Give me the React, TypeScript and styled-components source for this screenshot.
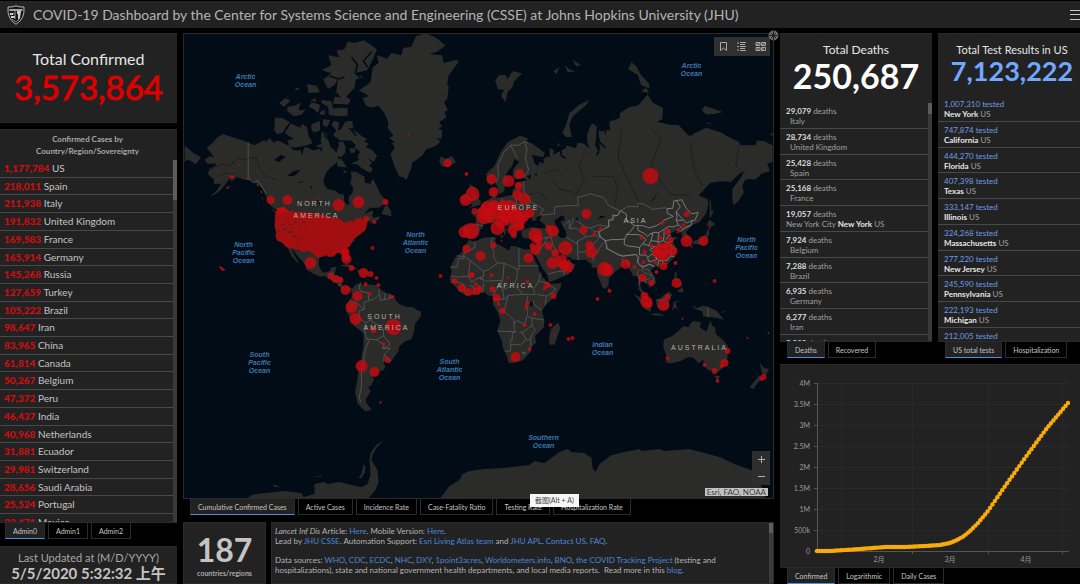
import React from "react";
import styled, { createGlobalStyle, css } from "styled-components";

const GlobalStyle = createGlobalStyle`
  * { box-sizing: border-box; }
  body {
    margin: 0;
    background: #000;
    color: #bdbdbd;
    font-family: Lato, "Noto Sans CJK SC", sans-serif;
    font-size: 8px;
    overflow: hidden;
  }
  h1, h2, p, ul { margin: 0; padding: 0; font-weight: 400; }
  ul { list-style: none; }
  button { font-family: inherit; border: 0; padding: 0; margin: 0; color: inherit; background: none; }
`;

/* ---------- page frame ---------- */

const Page = styled.div`
  height: 100vh;
  min-height: 480px;
  display: flex;
  flex-direction: column;
  gap: 5px;
  padding-top: 1px;
`;

const Header = styled.header`
  flex: none;
  height: 27px;
  display: flex;
  align-items: center;
  background: #222;
  padding-left: 7px;
`;

const Title = styled.h1`
  flex: 1;
  margin-left: 8px;
  font-size: 14px;
  line-height: 20px;
  white-space: nowrap;
  color: #b4b4b4;
`;

const MenuButton = styled.button`
  width: 10px;
  height: 12px;
  display: flex;
  flex-direction: column;
  justify-content: space-between;
  padding: 1px 0;
  span { height: 1px; background: #c8c8c8; }
`;

const Columns = styled.main`
  flex: 1;
  min-height: 0;
  display: grid;
  grid-template-columns: minmax(0, 177fr) minmax(0, 591fr) minmax(0, 300fr);
  column-gap: 6px;
`;

const Column = styled.div`
  display: flex;
  flex-direction: column;
  min-height: 0;
  min-width: 0;
`;

const Panel = styled.section`
  background: #222;
  border: 1px solid #2a2a2a;
  border-width: 1px 0;
  overflow: hidden;
`;

/* ---------- tabs ---------- */

const TabBar = styled.div<{ $indent: number; $after?: number }>`
  flex: none;
  display: flex;
  gap: 3px;
  padding-left: ${(p) => p.$indent}px;
  margin-bottom: ${(p) => p.$after ?? 7}px;
`;

const TabButton = styled.button<{ $active?: boolean }>`
  height: 16px;
  padding: 0 7px;
  font-size: 7px;
  line-height: 12px;
  white-space: nowrap;
  color: #c4c4c4;
  border: 1px solid #2b2b2b;
  border-top: 0;
  ${(p) =>
    p.$active &&
    css`
      background: #222;
      border-bottom: 1px solid #4c8fe0;
    `}
`;

function Tabs({ items, indent, after }: { items: string[]; indent: number; after?: number }) {
  return (
    <TabBar $indent={indent} $after={after} role="tablist">
      {items.map((t, i) => (
        <TabButton key={t} role="tab" aria-selected={i === 0} $active={i === 0}>
          {t}
        </TabButton>
      ))}
    </TabBar>
  );
}

/* ---------- left column ---------- */

const TotalPanel = styled(Panel)`
  flex: none;
  height: 90px;
  margin-bottom: 6px;
  padding-top: 15px;
  text-align: center;
`;

const TotalLabel = styled.h2<{ $size: number }>`
  font-size: ${(p) => p.$size}px;
  line-height: 20px;
  color: #e6e6e6;
  white-space: nowrap;
`;

const TotalValue = styled.p<{ $size: number; $color: string; $bold?: boolean; $line: number }>`
  font-size: ${(p) => p.$size}px;
  line-height: ${(p) => p.$line}px;
  color: ${(p) => p.$color};
  font-weight: ${(p) => (p.$bold ? 700 : 400)};
  -webkit-text-stroke: ${(p) => (p.$bold ? 0 : 1)}px ${(p) => p.$color};
  white-space: nowrap;
`;

const CountryPanel = styled(Panel)`
  flex: 1;
  min-height: 0;
  display: flex;
  flex-direction: column;
`;

const CountryHeading = styled.h2`
  flex: none;
  height: 30px;
  padding: 3px 2px 0 0;
  font-size: 8px;
  line-height: 12px;
  font-weight: 700;
  text-align: center;
  color: #a8a8a8;
`;

const ScrollArea = styled.div<{ $thumb: number }>`
  flex: 1;
  min-height: 0;
  display: grid;
  grid-template-columns: minmax(0, 1fr) 4px;
  &::after {
    content: "";
    background: linear-gradient(#5c5c5c, #5c5c5c) top / 100% ${(p) => p.$thumb}px no-repeat #3a3a3a;
  }
`;

const Rows = styled.ul<{ $count: number; $cut: number }>`
  flex: 1;
  display: grid;
  min-height: 0;
  grid-template-rows: repeat(${(p) => p.$count}, minmax(0, 1fr)) ${(p) => p.$cut}px;
`;

const CountryRow = styled.li`
  overflow: hidden;
  padding-left: 4px;
  border-bottom: 1px solid #484848;
  font-size: 10px;
  line-height: 17px;
  white-space: nowrap;
  color: #c4c4c4;
  &:last-child { border: 0; }
  strong { color: #d00d10; font-weight: 900; }
`;

const UpdatedPanel = styled(Panel)`
  flex: none;
  height: 38px;
  padding-top: 3px;
  text-align: center;
  white-space: nowrap;
`;

const UpdatedLabel = styled.h2`
  font-size: 11px;
  line-height: 15px;
  color: #a8a8a8;
`;

const UpdatedValue = styled.p`
  font-size: 15px;
  line-height: 16px;
  font-weight: 700;
  color: #c4c4c4;
`;

/* ---------- centre column ---------- */

const MapPanel = styled.section`
  position: relative;
  flex: 1;
  min-height: 0;
  background: #010c17;
  border: 1px solid #2a2a2a;
`;

const MapSvg = styled.svg`
  display: block;
  width: 100%;
  height: 100%;
  text {
    font-family: "Liberation Sans", sans-serif;
    font-size: 7px;
  }
`;

const MapTools = styled.div`
  position: absolute;
  top: 3px;
  right: 3px;
  width: 56px;
  height: 19px;
  display: flex;
  justify-content: space-around;
  align-items: center;
  background: #303030;
  color: #a8a8a8;
  button, svg { display: block; }
`;

const ZoomTools = styled.div`
  position: absolute;
  right: 3px;
  bottom: 13px;
  width: 18px;
  display: flex;
  flex-direction: column;
  background: #2e2e2e;
  button {
    height: 17px;
    display: grid;
    place-items: center;
    color: #b0b0b0;
  }
`;

const Attribution = styled.div`
  position: absolute;
  right: 5px;
  bottom: 2px;
  padding: 0 2px;
  font-size: 8px;
  line-height: 8px;
  background: #c2c2c2;
  color: #3c3c3c;
`;

const MoveHandle = styled.button`
  position: absolute;
  top: -4px;
  right: -6px;
  width: 11px;
  height: 11px;
  svg { display: block; }
`;

const Tooltip = styled.div`
  position: absolute;
  left: 346px;
  bottom: -9px;
  z-index: 2;
  padding: 0 5px;
  font-size: 7px;
  line-height: 13px;
  white-space: nowrap;
  background: #f6f6f6;
  color: #444;
`;

const FooterRow = styled.div`
  flex: none;
  height: 62px;
  display: grid;
  grid-template-columns: 83px minmax(0, 1fr);
  gap: 5px;
`;

const CountPanel = styled(Panel)`
  text-align: center;
  padding-top: 9px;
  border-width: 1px;
`;

const CountValue = styled.p`
  font-size: 32px;
  line-height: 36px;
  font-weight: 700;
  color: #c4c4c4;
`;

const CountLabel = styled.p`
  font-size: 7px;
  line-height: 11px;
  font-weight: 700;
  color: #a8a8a8;
`;

const NotesPanel = styled(Panel)`
  display: flex;
  border-width: 1px;
`;

const Notes = styled.div`
  padding: 3px 24px 0 3px;
  font-size: 8px;
  line-height: 10px;
  color: #b4b4b4;
  p + p { margin-top: 9px; }
  a { color: #4a86d8; text-decoration: none; }
`;

/* ---------- right column ---------- */

const StatGrid = styled.div`
  flex: 1;
  min-height: 0;
  display: grid;
  grid-template-columns: minmax(0, 152fr) minmax(0, 142fr);
  column-gap: 6px;
`;

const StatPanel = styled(Panel)`
  flex: 1;
  min-height: 0;
  display: flex;
  flex-direction: column;
`;

const StatHead = styled.div<{ $height: number; $shift?: number }>`
  flex: none;
  height: ${(p) => p.$height}px;
  padding: 6px 0 0 ${(p) => p.$shift ?? 0}px;
  text-align: center;
`;

const StatRow = styled.li<{ $tested?: boolean }>`
  overflow: hidden;
  padding: 3px 0 0 6px;
  border-bottom: 1px solid #484848;
  font-size: 8px;
  line-height: 10px;
  white-space: nowrap;
  color: #a0a0a0;
  &:last-child { border: 0; }
  div:first-child { color: ${(p) => (p.$tested ? "#6d9ce4" : "#a0a0a0")}; }
  div:first-child b { color: ${(p) => (p.$tested ? "#6d9ce4" : "#dcdcdc")}; font-weight: ${(p) => (p.$tested ? 400 : 700)}; }
  b { color: #e6e6e6; }
`;

const Place = styled.div<{ $inset?: boolean }>`
  padding-left: ${(p) => (p.$inset ? 4 : 0)}px;
`;

const ChartPanel = styled(Panel)`
  flex: none;
  height: 204px;
  svg { display: block; width: 100%; height: 100%; }
  text { font-size: 7px; fill: #9a9a9a; }
`;

/* ---------- data ---------- */

const countries: [string, string][] = [
  ["1,177,784", "US"], ["218,011", "Spain"], ["211,938", "Italy"], ["191,832", "United Kingdom"],
  ["169,583", "France"], ["165,914", "Germany"], ["145,268", "Russia"], ["127,659", "Turkey"],
  ["105,222", "Brazil"], ["98,647", "Iran"], ["83,965", "China"], ["61,814", "Canada"],
  ["50,267", "Belgium"], ["47,372", "Peru"], ["46,437", "India"], ["40,968", "Netherlands"],
  ["31,881", "Ecuador"], ["29,981", "Switzerland"], ["28,656", "Saudi Arabia"], ["25,524", "Portugal"],
  ["23,471", "Mexico"],
];

const deaths: [string, React.ReactNode, boolean?][] = [
  ["29,079", "Italy"], ["28,734", "United Kingdom"], ["25,428", "Spain"], ["25,168", "France"],
  ["19,057", <>New York City <b>New York</b> US</>, true], ["7,924", "Belgium"], ["7,288", "Brazil"],
  ["6,935", "Germany"], ["6,277", "Iran"], ["5,082", "Netherlands"],
];

const tests: [string, string][] = [
  ["1,007,310", "New York"], ["747,874", "California"], ["444,270", "Florida"], ["407,398", "Texas"],
  ["333,147", "Illinois"], ["324,268", "Massachusetts"], ["277,220", "New Jersey"],
  ["245,590", "Pennsylvania"], ["222,193", "Michigan"], ["212,005", ""],
];

/* ---------- world map ---------- */

const PX_PER_DEG = 1.6304;
const RADIUS = 93.4;

/* Web Mercator, from "lon,lat lon,lat ..." to an SVG path */
function geo(points: string, close = true) {
  const d = points
    .trim()
    .split(/\s+/)
    .map((p) => {
      const [lon, lat] = p.split(",").map(Number);
      const x = 478.6 + lon * PX_PER_DEG;
      const y = 302.6 - RADIUS * Math.log(Math.tan(Math.PI / 4 + (lat * Math.PI) / 360));
      return x.toFixed(1) + " " + y.toFixed(1);
    })
    .join("L");
  return "M" + d + (close ? "Z" : "");
}

const land = [
  "-168,65.6 -164,66.5 -162,66 -163.5,67.1 -166.5,68.3 -163,69.5 -160,70.6 -156.5,71.3 -152,70.8 -145,70.1 -141,69.6 -137,69 -134,69.6 -131,70.1 -130,69.7 -128,70.5 -125,69.5 -124,70 -121,69.8 -117,69 -115,68.9 -114,68 -111,67.8 -109,67.9 -108,66.7 -107,68 -106,68.7 -101,67.8 -97,68.2 -96,67.3 -95.5,68.5 -96.5,70 -96,71.5 -94.5,72 -93,71.3 -91.5,69.7 -90.5,68.6 -88,67.8 -87,67.2 -85.5,68.8 -85.5,69.8 -82.5,69.7 -81.3,68.6 -81.5,67.2 -84,66.2 -86.5,66.5 -85.5,65.8 -87.5,64.5 -90.5,63.5 -93.5,61.9 -94.7,60 -94.7,58.8 -92.5,57 -88,56.5 -85,55.3 -82.2,55.1 -82.3,53 -81,51.5 -79,51.2 -79.5,54.2 -77,55.7 -76.6,57.5 -78.5,58.8 -77.5,60.5 -78,62.3 -75,62.3 -72,61.5 -69.7,60.9 -69.5,59 -66,58.7 -64.5,60.3 -62,57.8 -60,55.3 -57,53.5 -55.8,52 -58.5,51.3 -60.5,50.2 -66.5,50.2 -70,47.5 -65,49.2 -64.3,48.5 -65,47 -64,46 -60.2,46.8 -61,45.2 -64,44.4 -66,43.5 -65.8,44.6 -67,45 -70,43.7 -70.7,42 -70,41.7 -74,40.6 -75.3,38.5 -76.3,37 -75.6,35.3 -78,33.9 -81,32 -81.4,30.5 -80,27 -80.5,25.2 -81.8,26 -82.7,28 -84,30 -86,30.4 -89.3,30.2 -89.3,29.1 -91,29.2 -94,29.6 -97,28 -97.5,25.5 -97.8,22.5 -96,19 -94.5,18.2 -92,18.6 -90.7,19.5 -90.3,21 -87,21.5 -87.5,19 -88.3,16 -84,15.8 -83.2,15 -83.7,11 -82,9 -79.6,9.6 -77.3,8.6 -77.9,7.3 -80,7.5 -80.5,8.2 -83,8.3 -85.8,10 -87.5,12.9 -91,14 -94,16.1 -96.5,15.7 -101.5,17.7 -105.5,20 -105.5,22 -109,25.7 -112.5,29.5 -114.7,31.7 -112.8,28 -110,24 -109.5,23 -112,24.8 -114.5,27.5 -115.8,30 -117.2,32.5 -120.5,34.5 -122.5,37.5 -124.3,40.3 -124,44 -124.5,48.3 -122.5,48 -123.5,49.3 -127.5,51 -130,54.5 -132,57 -135,58.5 -139,59.8 -144,60 -148,60.8 -151.8,59.2 -151,61 -154,59.3 -158,56.5 -162,55 -164.5,54.6 -161,56 -157.5,58.7 -162,58.7 -162,60 -166,61.7 -164.5,63.2 -161,64 -161,64.6 -166,64.5",
  "-44,59.8 -45.5,60.6 -48.5,61 -49.5,62.2 -51.5,64 -52.5,65.5 -53.7,67 -51,68.5 -53,69.5 -51,69.7 -54.7,70.5 -52,71 -55.5,72.5 -55,73.5 -57.5,75 -61,76.1 -65,75.9 -68.5,76.1 -71,77.2 -67,77.5 -73,78.2 -66,79.2 -64.5,80.8 -61,81.2 -62,81.9 -56,81.6 -53,82.1 -47,81.9 -46,82.5 -41,82.6 -38,83.4 -32,83.6 -26,83.3 -20,82.7 -25,82.2 -30,82 -22,81.9 -21,81.2 -13,81.5 -12,81.3 -18,80 -19,79 -18,78.7 -19,77 -21,76.7 -18.5,75.5 -20.5,75.2 -19.5,74.3 -24,73.5 -22,72.8 -24.5,72.3 -22,72 -22.5,70.3 -26,70.5 -23,69.8 -26,68.8 -32,68 -34,66.7 -37,65.8 -40.5,64.8 -41,63.4 -43,61",
  "-89,76.4 -84,76.4 -80,76.3 -78,77 -81,77.4 -76,78.5 -75,79.5 -70,79.8 -76,80.2 -68,80.5 -65,81.4 -62,82.4 -70,83.1 -76,82.9 -80,83 -82,82.4 -87,82.3 -85,81.7 -92,81.9 -90,81 -96,80.5 -90,80.2 -95,79.5 -92,78.4 -88,78.9 -86,79.6 -87,78 -84,77.3 -88,77.4",
  "-80,75.8 -80,74.6 -86,74.5 -91.5,74.7 -92,76 -96,76.5 -96,77 -90,76.8 -89,75.7 -84,75.9",
  "-81,73.7 -76,72.8 -78,72.2 -74,71.6 -71,70.8 -68,70.3 -70,69.8 -67,69.3 -69,68.6 -65,67.9 -62,66.6 -64,65 -68,66.2 -65,64.8 -67,64 -64.7,63.3 -66,62 -69,62.7 -72,63.5 -74,64.3 -78,64.5 -73,65.5 -74,66.3 -72.5,67.5 -76,68.5 -75,69 -78,70 -85,70 -86,70.4 -89,71 -87,72 -90,73.1 -88,73.8 -85,73.4 -86,72 -84,72.3",
  "-105,69 -101.5,69.5 -104,71 -105,72.7 -108,73.2 -109,72.5 -111,72.8 -115,73.3 -118.5,71.5 -113,70.3 -117,70 -116,69 -113,68.5 -110,68.6",
  "-125,72 -123,71.2 -120,71.6 -118,72.5 -115.5,73.5 -120,74.2 -124.5,74.3",
  "-117,75.3 -113,74.5 -108,74.8 -106,75.5 -110,75.5 -109,76.6 -113,76.1 -117,76",
  "-102,73.2 -97,73.7 -97,72 -101,71.6 -102.5,72.5", "-95,74 -90.5,73.9 -92.5,72.7 -95.5,72.8",
  "-104,76 -101,75.7 -98,75 -97,76.3 -102,76.7", "-105,79 -99,78.8 -97,78 -104,77.9",
  "-122,76.5 -117,77.5 -115,76.9 -119,76", "-87,65.5 -84,65.9 -80.5,63.5 -86,63.8", "-99,69 -95.5,69.3 -96,68.4 -99,68.6",
  "-79,68.3 -75,68.2 -75.5,67.3 -78,67.2", "-83,62.8 -80,62.3 -82,62", "-80,73.7 -77,73.7 -77,73 -80,73.1",
  "-112,78.6 -109,78.4 -112,78.2", "-97,75.2 -94,75.6 -94,74.7 -97,74.8", "-103,76.9 -100,77.2 -99,76.7",
  "-59.3,47.7 -53,46.7 -53.5,48.7 -55.8,51.5 -57.5,50.5", "-128,50.8 -123.5,48.4 -125.5,48.8", "-133,54 -131.5,52.3 -132,54", "-154.5,57.5 -152,58.2 -153,57",
  "-84.8,22 -80,23.2 -74.3,20.2 -77.5,19.9 -78,21", "-74,19.8 -69,19.3 -68.6,18.3 -74,18.2", "-78.3,18.4 -76.3,18", "-67,18.4 -65.7,18.4 -66,18",
  "-77.3,8.6 -75,11 -71.8,12.3 -71.5,10.8 -68,11 -62,10.7 -60,8.5 -57,6 -51.8,4.5 -50,0.5 -48,-1 -44,-2.6 -40,-2.9 -37,-4.8 -35.2,-5.3 -34.9,-8 -38.8,-13 -39.2,-17.5 -41,-22 -44.5,-23 -48.5,-26 -48.7,-28.5 -52.2,-32.5 -54,-34.7 -58.3,-34 -56.8,-36.5 -58,-38.3 -62.2,-39 -62.2,-40.7 -65,-41 -63.8,-42.5 -65.4,-45 -67.5,-46.2 -65.8,-47.5 -69,-51 -68.4,-52.4 -65.3,-54.8 -69,-55.5 -74,-52.5 -75.5,-48 -74,-42 -73.5,-38 -71.5,-32 -70.3,-25 -70.3,-18.5 -76.2,-14 -79.5,-7.5 -81.3,-4.5 -80,-2.5 -80.5,-0.5 -78.8,1.5 -77.2,4 -77.9,7.3",
  "25.8,71 31,70.3 29,69.8 33,69.4 41,67.2 40,66.2 33,66.7 34.8,64.5 37,63.9 37.5,65 40.5,64.6 40,65.6 42.2,66.4 44,66.1 43.8,68.4 46.5,67.9 46,66.8 54,68.4 54,68.9 60,68.4 61,69.6 64.8,69.3 68.5,68.2 67,69.6 66.8,71 68.5,72.6 70,73.3 72.8,72.8 72.5,71 71.8,69 73.5,67.8 72,66.4 74,67 74.8,68.5 73.8,70 74,72 76,71.8 77.5,72 78,71 79,72.2 81,72 80.5,73.6 86.8,74.2 87,75 92,75.9 98,76.2 104,77.7 107,76.6 113.5,75.8 113,74 106,73 110,73.6 118,73 123,73 129,71 131,71 133,71.5 140,72.5 150,71.5 152,71 160,69.7 161,69 170,69 171,70 176,69.8 180.7,68.9 180.7,65 177.4,64.6 179,62.5 174,61.8 170,60 166,60.2 163.5,59.8 162,58 163,56 160,53 156.8,51 156,53.5 156,57 161,60.5 163.5,62.5 160,61.7 155,59.3 149,59.5 142.5,59 135.3,54.8 140.5,53.5 141.3,52 140,48 135.5,44 132,43.2 130.5,42.3 127.5,39.7 129.3,37 129,35.2 126.5,34.5 126.5,37.5 125,38 125,39.6 121.5,39 122,40.6 118,39 119,37.3 122.5,37.2 119.3,35 121.8,31.5 121.8,28.5 119,25.5 116.5,23 113,22 110,20.5 110,21.5 108,21.5 105.8,19 108.5,15.5 109.2,12 106.8,10.4 105,8.7 105,10.3 102.5,12.1 100.9,12.8 100,13.4 99.5,10.5 100.2,8.4 101.5,6.8 103.4,4.5 104.2,1.4 103.4,1.4 101,3.5 100.3,6 98.3,8 98.6,12 97.6,16.3 95,15.8 94.3,18 92.3,20.8 91,22.6 88,21.7 86.8,20.5 85,19.5 82.3,16.7 80.2,15 80.2,13 79.8,10.3 78,8.3 76.5,9 74.8,13 73,17 72.7,21 70.8,20.7 69,22.3 70,23 67.3,24.2 66.5,25.4 61.5,25.1 57.3,25.7 56.5,27.1 53,26.7 51,28 50,30 48,30 48.5,28.3 50.2,26.5 51,24.7 51.5,25.9 51.5,24.3 54,24.1 56.3,26.2 56.7,24.3 59.8,22.5 57.7,19 55,17 52,15.6 45,12.8 43.3,12.7 42.7,16.4 39.1,21 37,25 35,28 34.3,31.3 35,33 36,36.7 33,36.1 30.5,36.5 27.5,36.8 26.5,39 27,40.3 29,41.1 33,42 36,41.5 41.5,41.4 41,43 37.5,45 39.2,47.1 35,46.2 36.5,45.3 33.5,44.5 33,46.1 30.7,46.5 29.5,45.2 28,43.3 28,41.8 28.8,41.1 26,40.7 23.5,40.5 24,38 23,36.5 21.5,37 20.8,38.8 19.4,40.8 19.4,41.9 15.5,44 13.8,45 12.3,45.2 12.5,44 15.5,42 18.5,40.2 16.9,40.4 17,39 15.8,38 16,40 12.5,41.7 10.2,43.8 8,44 5,43.3 3.2,43 3,41.8 0,40 -0.2,38.5 -2,36.8 -5.5,36.1 -6.4,36.9 -8.9,37 -9.3,38.8 -8.8,43.2 -1.8,43.4 -1.2,46 -4.5,48.2 -1.6,48.6 -1.5,49.6 1.5,50 2,51 4.5,52.7 7,53.5 8.6,54 8.2,56.8 10.5,57.6 10.5,55.5 11,54 14,54 18.5,54.7 21,55 21.3,57 24,57.2 23.6,59.1 30,59.8 28,60.5 23,60 21.3,61 21.5,63 25.3,65 22.2,65.8 21,64 17.5,62 17.2,60.7 18.8,59.8 16.5,58 16,56.3 14.3,55.5 12.8,55.5 11,59 8,58.1 5.5,59 5,61.8 10,64 14,67.5 18,69.6",
  "-180,68.9 -175,67.3 -170,66.2 -173,64.4 -178,65.6 -180,65",
  "-5.9,35.8 -2,35.1 3,36.9 10,37.3 11,36.8 10.2,34.3 15.5,32.3 19,30.3 20,32.8 23,32.6 29,30.9 32.3,31.3 34.3,31.3 34.9,29.5 34,28 32.5,29.9 33.5,27.8 35.5,24 37.2,21 37.3,19 39.5,15.5 43.2,12 43.3,11.4 51.2,11.9 50.8,9.5 48,4.5 42,-1 39.2,-5 40.6,-11 40.5,-15 35,-20 35.5,-24 32.8,-26 32.3,-28.7 28,-33 25.7,-34 20,-34.8 18.3,-34 18,-32 15.2,-27 14.4,-22.5 11.8,-17 13.7,-11 12.2,-6 9,-1 9.5,4 6,4.3 4.3,6.3 -2,4.8 -7.6,4.4 -11.5,6.8 -13.2,9 -16.7,12.3 -17.4,14.7 -16.2,19 -17,21 -14.5,26.2 -11.5,28.2 -9.7,30 -9.3,32.5 -6.8,34",
  "-24,65.5 -22.5,66.4 -20,65.8 -16,66.5 -13.6,65 -18.5,63.5 -22.6,63.9", "-5.7,50.1 1.3,51.2 1.7,52.7 -0.2,54 -2,56 -2,57.6 -5,58.6 -6,56.5 -3,54 -4.5,53 -5,51.7 -3,51.4", "-10,52 -6.3,52.3 -6,54.5 -8,55.3 -10,54",
  "8.5,39 9.7,39.2 9.4,42.8 8.6,42", "12.5,38 15.5,38.2 15,36.7", "23.5,35.4 26,35.2 25,35", "32.3,35 34.5,35.6 33.5,34.7",
  "10.5,79.4 13,80 17,80 18,79.5 21,80.4 27,80.2 22,79.3 21,78.6 18,78 17,76.7 14,77.5 16,78.3 12,78.4",
  "51.5,71.5 54,73 56,75 62,76.3 68.5,77 66,76.2 58,74.5 56,73 57.5,70.7 54,70.7", "92,80.6 94,81.3 97,80.9 100,80 105,79 105,78.5 100,78.9 98,80", "103,78.6 100,78.1 105,77.9",
  "137,75.5 139,76.1 143,75.8 150,75.2 145,74.9 140,74.8", "140,73.5 143.5,73.3 141,73.2", "46,80.4 50,80.8 48,80.1", "53,81 56,80.6 60,80.4 55,80.3", "58,81.5 63,81 60,80.9", "178.5,71.3 180.6,71.5 180.6,70.9", "49,69.4 50.5,69 48.5,68.7",
  "142,54.2 143,52 142.9,49 144.5,49 142.7,46 141.9,46.5 142,50", "140,42 141.7,45.4 145.5,43.3 143,42 141,42.5", "131,34 135.5,33.5 140,35.3 142,39.5 141,41.3 139.5,38.5 136.5,36.5 133,35.5", "130,33.5 131.8,33 130.8,31.2",
  "120.3,23.5 121.8,25.1 120.8,22", "108.7,19.3 110.8,20 109.5,18.3", "120.5,18.5 122,18 121.5,15.5 124,12.8 120.5,14", "122,7 125.5,9.6 126,6.5 124,6.3", "122,11.8 125,12.3 125,10 123,9.4",
  "109,1.5 112,3 117,7 119,5 117.5,1 116,-4 110,-3", "95.3,5.5 98,4 103.5,0 106,-3 105.8,-5.8 102,-4 98.5,1.5", "105.5,-6.8 110.5,-6.5 114.5,-8 108,-7.8", "119,-5.5 120,0.5 124.5,1.2 121,0 122.5,-4.5 120.5,-3",
  "131,-1 134,-3.5 138,-1.7 145,-4.3 147.5,-6.2 150.5,-10.5 147,-9.5 143,-9 138,-8.2 137.5,-5.3 133,-4", "149,-6 152,-4.5 151,-6", "124,-10 127,-8.5 125,-9.3", "164,-20 167,-22.3 165,-21.4",
  "114,-22 113.5,-26 115.7,-31.5 115,-34.2 118,-35 123.5,-34 129,-31.7 132,-32 135.5,-34.8 138,-33 138.5,-35.6 141,-38.3 144,-38.5 147,-39 150,-37.2 153,-32 153.3,-26 150.5,-22.5 146,-19 145.3,-15 143.5,-14 142.5,-10.8 141,-15 140,-17.6 136,-15 136.8,-12.2 132,-11.3 130,-13 129,-15 126,-14.2 123,-17 119,-20",
  "144.7,-40.8 148.2,-41 147,-43.6", "172.7,-34.5 175,-37 178.4,-37.7 176,-41.2 174,-39.5", "172.7,-40.6 174,-41.8 171,-44.5 169,-46.7 166.5,-46", "49.2,-12 50.4,-15.5 47,-25 44,-25 43.5,-22 44.5,-16", "79.8,9.5 81.8,7.5 80.3,6",
  "-61,-51.5 -58,-51.7 -60,-52.2",
];

const water = [
  "47,45 51,47 53,46.5 53,45 50.5,44.5 52.5,41.5 54,40 54,37 51,36.8 49,38 50,40.3 47.5,43",
  "58.5,45 61,46.5 61,44.5", "104,51.5 108,53.5 110,55.7 108,54 105,52", "73.5,45.5 78.5,46.6 75,46.9", "30,61 32.5,61.5 32,60", "34.5,61.5 36,62 36,61",
  "-125,65.5 -121,66.8 -118,66.3 -122,65", "-117,61.2 -113,62.5 -109,62.8 -113,61", "-111,59.2 -106,59.5 -109,59", "-99,53.5 -97,52.5 -96.5,50.5 -98,52", "-103,58 -101.5,56.5 -102,58",
  "31.7,0.5 34,0.3 33.5,-2.3 31.8,-2", "29.3,-4 30.8,-8.5 29.5,-6",
];

const borders = [
  "-8.7,27.3 -4.8,25 3.2,19 5.8,19.5 12,23.5 9.5,26.5 9.8,30 8,33 8.5,37", "-8.7,27.3 -8.7,28.8 -2,32 -1.8,35", "-8.7,27.3 -13.2,27.5", "-8.7,27.3 -8.7,26 -12,26 -13,21.3 -17,21.2",
  "-4.8,25 -6,16 -11.5,15.5 -16.4,16", "25,31.7 25,22 25,20 24,20 16,23.5 12,23.5", "25,22 37,22", "16,23.5 15,13.2 13,13.5 4,13 1,15 3.5,16 3.2,19", "24,20 24,15.5 22,11 15,7.5 14,13",
  "22,11 27.5,5 35,5 34,8 37,13 38.5,18", "37,13 43,12", "36,5 42,4 41,-1.5", "42,4 48,8 43,11", "15,7.5 16,2 9.5,2.2", "9,4.5 13.5,11 14,13", "16,2 18.5,4.5 27.5,5", "18.5,4.5 16,-4.8 12.5,-5", "30.5,4 29.5,-1 30.5,-8.5 33,-9.5 40.4,-10.6", "34,1 34,-1 39,-4.7",
  "16.5,-6 19,-8 22,-11 22,-13 24,-11 28.5,-13 30,-8.5", "22,-13 22,-16 23.3,-17.6 12,-17.3", "23.3,-17.6 21,-18.3 21,-22 20,-22 20,-28.5 16.5,-28.6", "20,-25 26,-25 29.5,-22.2 32,-22 32.5,-26.5", "25.2,-17.8 27,-18 29.5,-22.2", "27,-18 30.5,-15.6 33,-14 33,-9.5", "33,-14 35,-16.5 33,-19 32,-22", "27,-29.5 29,-29 28.5,-30.5 27,-29.5", "-6,16 -4,12.5 0,15 3.5,14", "-5.5,10.4 -2.8,9.7 -3,5", "0,11 1.2,6.2", "2.7,6.4 3.5,12", "-8.5,7.6 -8,10.3 -11,12.3 -16.7,12.4", "-7.5,4.5 -8.5,7.6 -11,7",
  "-72,12 -73,9 -72,7 -67.5,6 -67,1.2 -70,0 -69.8,-4.2 -73,-5 -73,-9.5 -70.5,-11 -69,-12.5 -69.3,-17.5 -70.3,-18.3", "-79,1.3 -75,0 -78,-3 -80,-4.3", "-75,0 -70,-4", "-60.5,5 -61,8", "-60.5,5 -60,1.5 -56,2 -51.5,4", "-57,6 -57.5,2", "-54,5.5 -54.5,2.5", "-67,1.2 -64,2 -60.5,5", "-69,-12.5 -65.3,-10 -65,-12 -60,-14 -58,-16.5 -58,-20 -62.5,-22.2 -66.5,-22 -68.5,-21.5 -69.3,-17.5", "-62.5,-22.2 -57.8,-25 -58.5,-27.2 -54.5,-25.5 -54.3,-24 -58,-20", "-68.5,-21.5 -67,-23 -68.5,-26 -70,-31 -70,-34 -71.5,-39 -71.5,-46 -73,-50 -72,-52", "-58.5,-27.2 -53.7,-27 -57.5,-30.2 -58,-34", "-57.5,-30.2 -53.4,-33.7",
  "-92,14.5 -90.5,17.8 -89.2,17.8 -88.5,16", "-89.5,14.2 -87,13", "-85.5,11 -83.7,11", "-90,14 -89,15.7",
  "11,59 12.5,61 12,64 16,67.5 20,69 25,69 28.5,69.8 31,69.5", "20,69 24,66", "28.5,69.8 30,68 29,66 31,62.8 28,60.6", "28,59.5 28,56 31,54 32,52.5 40,49.7 38,47.2", "23.5,54 23.5,51.5 31,51.5 32,52.5", "24,50.5 22.5,49 26.5,48.2 28.2,45.5", "15,51 14.5,53.8", "15,51 12.5,50.2 13.8,48.8 17,48.8 22.5,49", "-1.5,43.3 3,42.5", "7.5,43.8 7,46 8,47.6 8.2,49 6,49.5 2.5,51", "7,46 13.5,46.5 16,46.5", "-7,37.2 -6.9,41.9 -8.8,42",
  "36,36 42.4,37.1 44.8,37.2 44.8,39.6 43.5,41.2", "39,47.2 47,47.8 47,50.5 55,51 61.5,51 61,54 69,55.3 77,54 80,51 87,49 85.5,47.2 80,45 80.3,42.2 74,43 69,41.5 66,42 58.6,45.6 56,41.3 56,45 52.5,42.5", "56,41.3 60,41.5 66.5,37.5 61,35.3 60.5,34 54,37.3", "66.5,37.5 71.5,38 75,37.3 71,34 69.5,31.8 66.5,29.9 61,29.5 61.5,25.2", "61,35.3 61,29.5", "75,37.3 78,35.5 75,32.5 73,29 70,28 71,24.5", "42.4,37.1 41,34.4 39,32.2 35.5,30", "41,34.4 46.5,29.1 48.5,28.5", "39,32.2 37,29.5 35,29.4", "44.8,37.2 46,33 48,30", "43,17.2 48,18.5 52,19 53,16.7", "52,19 55,20 55.5,23.5 51.5,24.3", "69,41.5 71,40 74,40 75,37.3", "88,27.9 81,30.2 78,33", "88,27.9 92,27.8 97,28.3", "88.5,26.3 89,22", "92,25 92.5,21.5",
  "-141,69.6 -141,60.3 -137.5,59 -135,59.7 -130,55.5", "97,28.3 98.5,24 101,21.6 105,23 108,21.6", "98.8,20 97.5,18.5 99,14 98.8,10.5", "101,21.6 100.5,19.5 102,18 105,17 107.5,15 107.5,12.5 106,11", "105.5,15 102.5,13.5 102.9,12", "102,20 104.5,20 107,16", "109.5,1.8 112,1.3 115,3 117.5,4.2",
  "141,-2.6 141,-9.1", "126.5,41.7 130.3,42.5", "87.5,49 92,50.8 98,50.5 98,52 102,51.5 107,49.5 114,50.2 117,49.8",
];

const faintBorders = [
  "-164,63 -157,64.5 -152,64 -148,66 -141,65.5", "-141,66 -136,66 -134,63 -130,61 -124,60", "-160,61 -155,62 -150,61.5",
  "60,55 65,60 62,64 66,68", "70,61 83,61 86,57 84,52", "88,72 86,66 90,62 94,58 98,53 99,50.5", "105,73 112,70 106,64 114,58 118,55 130,55", "45,60 50,57 57,56 60,55", "40,62 48,63 52,61", "130,70 133,62 138,58", "160,69 158,64 163,62", "30,55 38,56 42,53",
];

const chinaBorders = [
  "75,37.3 73.8,39.5 77,41 80.3,42.2 80,45 83,45.2 82.5,47.2 85.5,47 87.5,49 91,47.5 91,45.2 96,42.7 101,42.6 105,41.6 109,42.5 112,43.7 114,45 119.7,46.7 116,48 116,49.8 119.5,50 120,52.8 125,53.2 127.5,50 131,47.700 135,48.300 133,45 131,44.800 131,43 128,42 126,41 124,40",
  "75,37.3 78,35.500 79,32.500 78.8,31.4 82,30.2 86,28 89,27.3 92,27.8 97,28.3 98.5,27 97.6,24 99.5,22 101.5,21.3 105,23 108,21.6",
  "78,35.5 82,36 86,36 90,36.3 91,38.5 93,39.5 96,42.7", "90,36.3 89.5,33.8 92,32.7 95,32.5 99,32 99,28", "91,38.5 98,38.5 101,37.5 103,36 101,34 99,32", "98,42.5 98,40.500 102,39 104,37.5 106,39.2 107,38 106,35.5 104.500,33 101,34", "107,38 107,39.500 111,39.5 114,41 117,42.300 119.500,42 123,43 121.500,45 122,46.5 121.500,48.500 124,50.500 121.5,53", "110.8,39.3 110.3,35 106,35.5", "110.3,34.6 113.500,35.500 114,37.500 114,40.500", "110.3,34.6 111,33 115,32 116,34.5 113.500,35.500", "116,34.5 119.300,35", "115,36 117,38 118,38.200", "115,32 116,29.800 113,29.500 109.500,30 110,32.500 106,32.5 104.500,33", "109.500,30 107,29.500 105.500,31 108,32", "109.500,30 109,27 106.500,28.500 104,26.500 103,28 99,28", "109,27 111,25 113,25 114,22.800", "113,25 114,27.500 113.500,29.500", "116,29.800 118.300,29.500 118,27.500 116,25 113,25", "118.300,29.500 119,31.500 121,31", "116,34.5 119,33 119,31.500", "118,27.500 120.500,27.200", "109,27 109.500,25.500 106,24.500 104.500,24.600 104,26.500", "111,25 110,22", "123,43 125.500,41", "121.500,45 126,45 128,43.800 131,44.800", "121.500,48.500 124,46.500 126,45", "115.500,41 117.500,40.500 117,39",
];

/* x, y, radius of each case marker */
const cases: number[][] = [
  [271,200,4],[288,200,5],[339,205,6],[359,202,6],[386,202,3],[448,163,4],[311,263,6],[347,259,5],[373,248,2],[352,268,3],[346,252,4],[364,273,5],[371,274,3],[377,278,2],[379,285,2],[336,279,4],[331,276,3],[341,280,3],[346,290,5],[358,296,5],[352,307,6],[356,319,6],[394,327,8],[374,330,3],[384,344,2],[388,360,3],[362,366,6],[375,372,5],[381,403,1],[441,276,2],[455,281,3],[462,288,4],[469,292,4],[477,291,4],[473,275,2],[476,284,2],[375,222,2],[367,219,3],[392,297,2],[370,294,2],[366,284,2],
  [467,174,2],[492,179,5],[509,181,6],[520,174,5],[519,186,4],[494,192,5],[518,195,5],[525,199,6],[473,194,7],[466,200,6],[475,211,3],[484,217,7],[488,208,7],[484,212,6],[498,209,7],[510,207,7],[507,215,8],[503,220,7],[518,220,8],[515,214,7],[524,216,6],[530,213,5],[498,228,7],[490,216,7],[513,230,5],[514,235,3],[520,226,5],[494,206,6],[504,205,5],[465,232,6],[472,231,8],[467,249,4],[494,245,3],[481,256,5],[502,241,1],[472,275,3],[492,275,2],[509,278,1],[529,258,5],[536,235,7],[538,239,5],[536,250,5],[533,246,3],[540,245,3],[549,246,4],[553,231,6],[549,228,3],[566,248,7],[556,253,4],[553,263,6],[562,261,6],[568,267,6],[564,265,5],[587,214,5],[584,230,4],[590,245,4],[592,252,6],[605,269,7],[601,229,2],[595,234,2],
  [651,176,8],[608,270,6],[626,264,5],[687,241,6],[704,241,5],[710,228,1],[677,283,5],[662,251,8],[664,256,5],[673,251,5],[658,253,5],[668,246,4],[668,232,3],[671,240,3],[645,252,2],[663,223,2],[687,214,3],[684,225,2],[679,230,2],[661,238,2],[642,238,2],[652,246,2],[656,262,2],[664,266,4],[644,262,2],[676,263,2],[657,272,2],[643,278,4],[652,283,3],[635,267,2],[610,291,2],[598,299,2],[715,281,2],[645,296,4],[647,302,6],[649,304,4],[664,305,6],[668,297,3],
  [493,289,3],[497,298,4],[503,311,3],[499,304,2],[509,277,1],[528,282,2],[548,285,3],[545,288,2],[554,296,3],[527,307,2],[528,303,2],[541,304,1],[535,314,2],[525,325,2],[551,325,2],[555,335,1],[569,339,2],[573,338,2],[530,349,2],[516,357,5],[480,289,3],[728,351,3],[725,363,4],[722,366,2],[715,371,3],[718,381,2],[668,358,2],[705,365,2],[764,377,3],[762,379,2],[748,338,1],[769,333,1],[683,319,1],
  [234,176,1],[228,188,1],[232,177,2],[240,165,1],[258,185,1],[262,192,1],[248,179,1],[409,134,1],[318,199,1],[306,201,1],
];

/* markers that merge into one mass over the United States */
const usCases: number[][] = [
  [281,216,5],[289,216,5],[283,228,7],[282,236,6],[290,242,6],[298,245,5],[304,248,4],[331,250,7],[338,237,8],[351,229,8],[360,225,7],[363,223,4],[346,242,6],[322,252,5],[344,250,4],[346,257,4],
];

const oceans: [number, number, string[]][] = [
  [246, 79, ["Arctic", "Ocean"]], [692, 68, ["Arctic", "Ocean"]], [244, 247, ["North", "Pacific", "Ocean"]],
  [416, 237, ["North", "Atlantic", "Ocean"]], [747, 242, ["North", "Pacific", "Ocean"]], [260, 357, ["South", "Pacific", "Ocean"]],
  [450, 364, ["South", "Atlantic", "Ocean"]], [603, 347, ["Indian", "Ocean"]], [544, 440, ["Southern", "Ocean"]],
];

const continents: [number, number, string][] = [
  [315, 206, "NORTH"], [317, 218, "AMERICA"], [385, 319, "SOUTH"], [387, 330, "AMERICA"], [519, 210, "EUROPE"],
  [636, 223, "ASIA"], [516, 288, "AFRICA"], [700, 350, "AUSTRALIA"], [524, 503, "ANTARCTICA"],
];

const usMass =
  "276,211 289,211 315,213 340,219 347,224 362,219 368,222 366,230 356,238 350,244 346,250 350,258 345,258 340,253 330,254 318,258 310,251 290,248 279,240 275,226";

/* grey land showing between the western counties */
const gaps = [
  [281,224,4,1],[284,228,3,2],[290,224,3,1],[288,231,4,2],[295,221,2,2],[299,227,3,1],[293,235,3,2],[303,221,2,2],[306,229,2,1],[301,238,2,2],[297,243,3,1],[310,222,2,1],[286,221,2,1],[308,238,1,3],[291,228,2,1],[279,231,2,1],
];

function WorldMap() {
  return (
    <MapSvg viewBox="184 34 590 464" preserveAspectRatio="xMidYMid slice" role="img" aria-label="World map of confirmed cases">
      <g fill="#2b2b29">
        {land.map((s, i) => <path key={i} d={geo(s)} />)}
        <path d="M247 499L252 495 265 493 285 491 302 493 304 497 315 494 315 484 325 482 328 484 340 482 352 485 362 487 368 484 371 475 370 460 371 453 377 445 384 440 377 448 373 455 372 460 378 470 379 482 376 490 370 497 368 499Z" />
        <path d="M364 464l2 3-1 6-3 5-3 0 3-4zM313 477l9-1 0 1zM273 484l8 3-6 0z" />
        <path d="M440 499L450 486 460 480 463 474 470 471 484 469 505 468 530 465 535 461 545 463 560 452 568 449 572 452 585 453 592 458 593 468 596 472 600 464 612 455 625 452 640 449 642 451 660 449 665 451 690 449 705 453 720 457 735 464 752 470 762 486 766 499Z" />
      </g>
      <g fill="#010c17">{water.map((s, i) => <path key={i} d={geo(s)} />)}</g>
      <g fill="none" stroke="#010c17" strokeWidth="1.6">
        <path d="M352 57l6 8-2 8 5 5M372 52l-8 9 4 6M330 76l9 3 6-2M382 48l4 6M285 97l12 5 12-2M323 125l3 12 6 4M350 128l7 8M300 110l6-6M560 146l2 10 4 2M598 134l2 8 6 6" />
      </g>
      <g fill="none" stroke="#191b1c" strokeWidth="0.8">{faintBorders.map((s, i) => <path key={i} d={geo(s, false)} />)}</g>
      <g fill="none" stroke="#5a5b5d" strokeWidth="0.8">{borders.map((s, i) => <path key={i} d={geo(s, false)} />)}</g>
      <g fill="none" stroke="#8a8a8a" strokeWidth="0.8">{chinaBorders.map((s, i) => <path key={i} d={geo(s, false)} />)}</g>
      <polygon points={usMass} fill="#a30f11" />
      <g fill="#a30f11">{usCases.map(([x, y, r], i) => <circle key={i} cx={x} cy={y} r={r} />)}</g>
      <path d="M219 266l3 1 4 3-3 1-2-2zM277 208l8-1 5 5-12 2z" fill="#b80e12" />
      <g fill="#c60b10" fillOpacity="0.82">
        {cases.map(([x, y, r], i) => <circle key={i} cx={x} cy={y} r={r} />)}
      </g>
      <g fill="#3a2a26" fillOpacity="0.9">
        {gaps.map(([x, y, w, h], i) => <rect key={i} x={x} y={y} width={w} height={h} />)}
      </g>
      <g fill="#3f77ad" textAnchor="middle" fontWeight="700" fontStyle="italic">
        {oceans.map(([x, y, lines]) =>
          lines.map((l, i) => <text key={x + l} x={x} y={y + i * 8}>{l}</text>)
        )}
      </g>
      <g fill="#b5b1ae" textAnchor="middle" letterSpacing="2">
        {continents.map(([x, y, l]) => <text key={l + x} x={x} y={y}>{l}</text>)}
      </g>
    </MapSvg>
  );
}

/* ---------- chart ---------- */

const curve: [number, number][] = [
  [817, 551], [830, 551], [845, 550], [860, 549], [873, 548], [885, 547], [905, 547], [925, 546], [940, 545], [950, 543], [957, 540], [964, 536], [970, 531], [978, 523], [988, 511], [1003, 489], [1025, 458], [1047, 428], [1068, 403],
];

function curvePoints(count: number) {
  const out: [number, number][] = [];
  for (let i = 0; i < count; i++) {
    const x = 817 + (251 * i) / (count - 1);
    const k = Math.max(1, curve.findIndex((p) => p[0] >= x - 0.01));
    const [x0, y0] = curve[k - 1];
    const [x1, y1] = curve[k];
    out.push([x, y0 + ((y1 - y0) * (x - x0)) / (x1 - x0)]);
  }
  return out;
}

function Chart() {
  const points = curvePoints(104);
  const ticks = ["4M", "3.5M", "3M", "2.5M", "2M", "1.5M", "1M", "500k", "0"];
  return (
    <svg viewBox="780 365 300 202" preserveAspectRatio="xMidYMid meet" role="img" aria-label="Confirmed cases over time">
      <g stroke="#292929">
        {ticks.map((t, i) => <path key={t} d={`M818 ${383.5 + i * 21}H1069`} />)}
        {[841.5, 912.5, 988.5, 1062.5].map((x) => <path key={x} d={`M${x} 383V551`} />)}
      </g>
      <path d="M817.5 383V551.5H1069M912.5 551v3M988.5 551v3M1062.5 551v3" stroke="#555" fill="none" />
      {ticks.map((t, i) => (
        <g key={t}>
          <path d={`M814 ${383.5 + i * 21}h3`} stroke="#555" />
          <text x="810" y={386 + i * 21} textAnchor="end">{t}</text>
        </g>
      ))}
      <text x="879" y="562" textAnchor="middle">2月</text>
      <text x="950" y="562" textAnchor="middle">3月</text>
      <text x="1026" y="562" textAnchor="middle">4月</text>
      <polyline points={points.map((p) => p.join(",")).join(" ")} fill="none" stroke="#f5a70a" strokeWidth="2" />
      {points.map(([x, y], i) => <circle key={i} cx={x} cy={y} r="2.2" fill="#f9ab0a" />)}
    </svg>
  );
}

/* ---------- icons ---------- */

const Shield = () => (
  <svg width="18" height="20" viewBox="0 0 18 20" aria-hidden="true">
    <path d="M1 2Q5 2.5 9 .8 13 2.5 17 2 18 14 9 19.300 0 14 1 2Z" fill="#161616" stroke="#b9b9b9" strokeWidth="1" />
    <path d="M2.500 4h13v2h-13z" fill="#a4a4a4" />
    <path d="M3 8h3v2H3zM4 11h4v2H4zM10 6h4l-1 7-2 3V9h-1z" fill="#d0d0d0" />
    <path d="M8 5v9M5 14l4 3 3-3M6 8l2 2" stroke="#8c8c8c" fill="none" />
  </svg>
);

const ToolIcon = ({ kind }: { kind: "bookmark" | "legend" | "basemap" }) => (
  <svg width="11" height="11" viewBox="0 0 11 11" fill="none" stroke="currentColor" aria-hidden="true">
    {kind === "bookmark" && <path d="M2.500 1.500h6v8l-3-2.500-3 2.500z" />}
    {kind === "legend" && <path d="M1 2h2M1 5.500h2M1 9h2M4 1.500h6M4 3.500h5M4 5.500h6M4 7.500h5M4 9.500h6" />}
    {kind === "basemap" && (
      <>
        <path d="M1 1.500h4v3h-4zM6.500 1.500h4v3h-4zM1 6.500h4v3h-4zM6.500 6.500h4v3h-4z" />
        <path d="M1 4l4-2M7 4l3-2M2 8h2M8 7v2" />
      </>
    )}
  </svg>
);

const Link = ({ children }: { children: React.ReactNode }) => <a href="#source">{children}</a>;

export default function App() {
  return (
    <>
      <GlobalStyle />
      <Page>
        <Header>
          <Shield />
          <Title>COVID-19 Dashboard by the Center for Systems Science and Engineering (CSSE) at Johns Hopkins University (JHU)</Title>
          <MenuButton aria-label="Menu"><span /><span /><span /></MenuButton>
        </Header>
        <Columns>
          <Column>
            <TotalPanel>
              <TotalLabel $size={16}>Total Confirmed</TotalLabel>
              <TotalValue $size={33} $line={36} $color="#dc0000">3,573,864</TotalValue>
            </TotalPanel>
            <CountryPanel>
              <CountryHeading>Confirmed Cases by<br />Country/Region/Sovereignty</CountryHeading>
              <ScrollArea $thumb={40}>
                <Rows $count={20} $cut={8}>
                  {countries.map(([n, c]) => <CountryRow key={c}><strong>{n}</strong> {c}</CountryRow>)}
                </Rows>
              </ScrollArea>
            </CountryPanel>
            <Tabs items={["Admin0", "Admin1", "Admin2"]} indent={5} />
            <UpdatedPanel>
              <UpdatedLabel>Last Updated at (M/D/YYYY)</UpdatedLabel>
              <UpdatedValue>5/5/2020 5:32:32 上午</UpdatedValue>
            </UpdatedPanel>
          </Column>

          <Column>
            <MapPanel>
              <WorldMap />
              <MapTools>
                <button aria-label="Bookmarks"><ToolIcon kind="bookmark" /></button>
                <button aria-label="Legend"><ToolIcon kind="legend" /></button>
                <button aria-label="Basemap gallery"><ToolIcon kind="basemap" /></button>
              </MapTools>
              <ZoomTools>
                <button aria-label="Zoom in"><svg width="9" height="9" stroke="currentColor"><path d="M1 4.500h7M4.500 1v7" /></svg></button>
                <button aria-label="Zoom out"><svg width="9" height="9" stroke="currentColor"><path d="M1 4.500h7" /></svg></button>
              </ZoomTools>
              <Attribution>Esri, FAO, NOAA</Attribution>
              <MoveHandle aria-label="Expand">
                <svg width="11" height="11" fill="none" stroke="#222">
                  <circle cx="5.500" cy="5.500" r="5" fill="#6a6a6a" stroke="none" />
                  <path d="M5.500 1v9M1 5.500h9M3 3l5 5M8 3L3 8" />
                </svg>
              </MoveHandle>
              <Tooltip role="tooltip">截图(Alt + A)</Tooltip>
            </MapPanel>
            <Tabs
              items={["Cumulative Confirmed Cases", "Active Cases", "Incidence Rate", "Case-Fatality Ratio", "Testing Rate", "Hospitalization Rate"]}
              indent={7}
            />
            <FooterRow>
              <CountPanel>
                <CountValue>187</CountValue>
                <CountLabel>countries/regions</CountLabel>
              </CountPanel>
              <NotesPanel>
                <ScrollArea $thumb={10}>
                  <Notes>
                    <p>
                      <i>Lancet Inf Dis</i> Article: <Link>Here</Link>. Mobile Version: <Link>Here</Link>.<br />
                      Lead by <Link>JHU CSSE</Link>. Automation Support: <Link>Esri Living Atlas team</Link> and <Link>JHU APL</Link>. <Link>Contact US</Link>. <Link>FAQ</Link>.
                    </p>
                    <p>
                      Data sources: <Link>WHO</Link>, <Link>CDC</Link>, <Link>ECDC</Link>, <Link>NHC</Link>, <Link>DXY</Link>, <Link>1point3acres</Link>, <Link>Worldometers.info</Link>, <Link>BNO</Link>, <Link>the COVID Tracking Project</Link> (testing and<br />
                      hospitalizations), state and national government health departments, and local media reports.&nbsp; Read more in this <Link>blog</Link>.
                    </p>
                  </Notes>
                </ScrollArea>
              </NotesPanel>
            </FooterRow>
          </Column>

          <Column>
            <StatGrid>
              <Column>
                <StatPanel>
                  <StatHead $height={69}>
                    <TotalLabel $size={12}>Total Deaths</TotalLabel>
                    <TotalValue $size={34} $line={32} $color="#fff" $bold>250,687</TotalValue>
                  </StatHead>
                  <ScrollArea $thumb={11}>
                    <Rows $count={9} $cut={6}>
                      {deaths.map(([n, place, flush]) => (
                        <StatRow key={n}>
                          <div><b>{n}</b> deaths</div>
                          <Place $inset={!flush}>{place}</Place>
                        </StatRow>
                      ))}
                    </Rows>
                  </ScrollArea>
                </StatPanel>
                <Tabs items={["Deaths", "Recovered"]} indent={7} after={6} />
              </Column>
              <Column>
                <StatPanel>
                  <StatHead $height={62} $shift={6}>
                    <TotalLabel $size={11}>Total Test Results in US</TotalLabel>
                    <TotalValue $size={27} $line={22} $color="#72a8ff" $bold>7,123,222</TotalValue>
                  </StatHead>
                  <Rows $count={9} $cut={13}>
                    {tests.map(([n, state]) => (
                      <StatRow key={n} $tested>
                        <div><b>{n}</b> tested</div>
                        {state && <Place><b>{state}</b> US</Place>}
                      </StatRow>
                    ))}
                  </Rows>
                </StatPanel>
                <Tabs items={["US total tests", "Hospitalization"]} indent={7} after={6} />
              </Column>
            </StatGrid>
            <ChartPanel><Chart /></ChartPanel>
            <Tabs items={["Confirmed", "Logarithmic", "Daily Cases"]} indent={7} after={0} />
          </Column>
        </Columns>
      </Page>
    </>
  );
}
